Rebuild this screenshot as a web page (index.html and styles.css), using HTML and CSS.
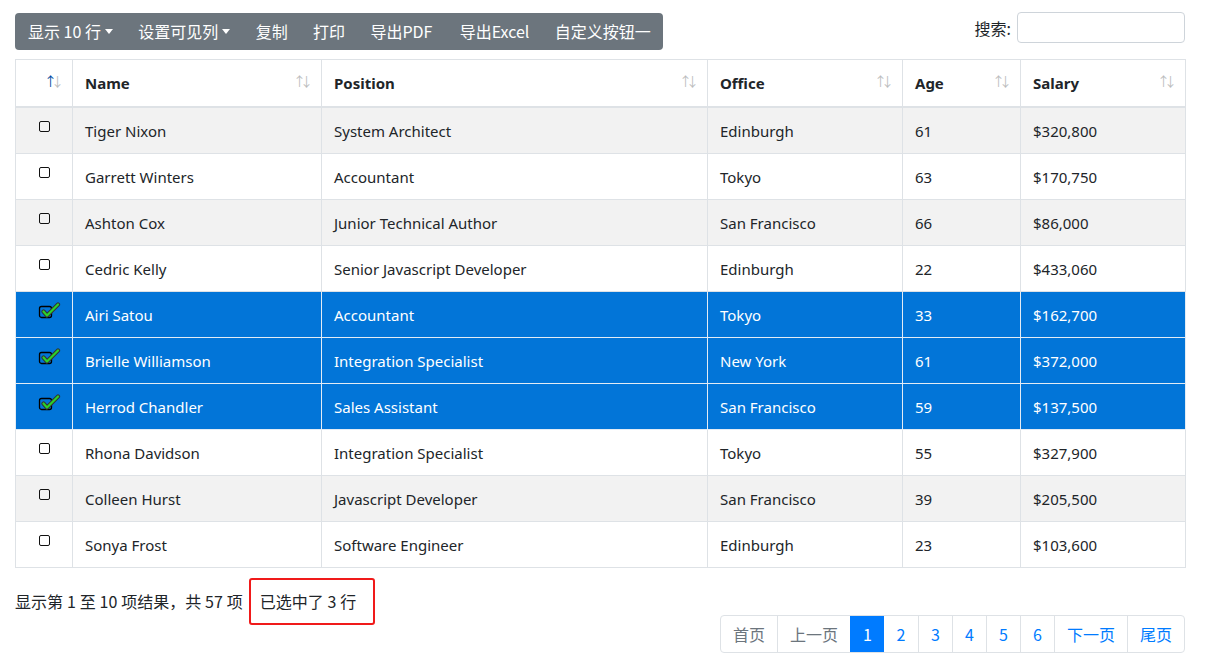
FILE: index.html
```html
<!DOCTYPE html>
<html lang="zh">
<head>
<meta charset="utf-8">
<title>DataTables</title>
<link rel="stylesheet" href="styles.css">
</head>
<body>
<div class="wrap">
  <div class="top">
    <div class="btn-group">
      <span class="btn">显示 10 行<span class="caret"></span></span>
      <span class="btn">设置可见列<span class="caret"></span></span>
      <span class="btn">复制</span>
      <span class="btn">打印</span>
      <span class="btn">导出PDF</span>
      <span class="btn">导出Excel</span>
      <span class="btn">自定义按钮一</span>
    </div>
    <label class="search">搜索:<input type="search" class="search-input"></label>
  </div>
  <table class="table">
    <colgroup>
      <col class="c0"><col class="c1"><col class="c2"><col class="c3"><col class="c4"><col class="c5">
    </colgroup>
    <thead>
      <tr>
        <th class="sort asc"></th>
        <th class="sort">Name</th>
        <th class="sort">Position</th>
        <th class="sort">Office</th>
        <th class="sort">Age</th>
        <th class="sort">Salary</th>
      </tr>
    </thead>
    <tbody>
      <tr class="odd"><td class="chk"><span class="box"></span></td><td>Tiger Nixon</td><td>System Architect</td><td>Edinburgh</td><td>61</td><td>$320,800</td></tr>
      <tr><td class="chk"><span class="box"></span></td><td>Garrett Winters</td><td>Accountant</td><td>Tokyo</td><td>63</td><td>$170,750</td></tr>
      <tr class="odd"><td class="chk"><span class="box"></span></td><td>Ashton Cox</td><td>Junior Technical Author</td><td>San Francisco</td><td>66</td><td>$86,000</td></tr>
      <tr><td class="chk"><span class="box"></span></td><td>Cedric Kelly</td><td>Senior Javascript Developer</td><td>Edinburgh</td><td>22</td><td>$433,060</td></tr>
      <tr class="sel"><td class="chk"><svg class="tick" viewBox="0 0 24 18" width="24" height="18"><rect x="1.5" y="4.5" width="12" height="11" rx="2" fill="none" stroke="#000" stroke-width="1.3"/><path d="M5.5 9.5 L9 13.5 L20 2.5" fill="none" stroke="#333" stroke-width="4.2" stroke-linecap="round" stroke-linejoin="round"/><path d="M5.5 9.5 L9 13.5 L20 2.5" fill="none" stroke="#2bd12b" stroke-width="2.2" stroke-linecap="round" stroke-linejoin="round"/></svg></td><td>Airi Satou</td><td>Accountant</td><td>Tokyo</td><td>33</td><td>$162,700</td></tr>
      <tr class="sel"><td class="chk"><svg class="tick" viewBox="0 0 24 18" width="24" height="18"><rect x="1.5" y="4.5" width="12" height="11" rx="2" fill="none" stroke="#000" stroke-width="1.3"/><path d="M5.5 9.5 L9 13.5 L20 2.5" fill="none" stroke="#333" stroke-width="4.2" stroke-linecap="round" stroke-linejoin="round"/><path d="M5.5 9.5 L9 13.5 L20 2.5" fill="none" stroke="#2bd12b" stroke-width="2.2" stroke-linecap="round" stroke-linejoin="round"/></svg></td><td>Brielle Williamson</td><td>Integration Specialist</td><td>New York</td><td>61</td><td>$372,000</td></tr>
      <tr class="sel"><td class="chk"><svg class="tick" viewBox="0 0 24 18" width="24" height="18"><rect x="1.5" y="4.5" width="12" height="11" rx="2" fill="none" stroke="#000" stroke-width="1.3"/><path d="M5.5 9.5 L9 13.5 L20 2.5" fill="none" stroke="#333" stroke-width="4.2" stroke-linecap="round" stroke-linejoin="round"/><path d="M5.5 9.5 L9 13.5 L20 2.5" fill="none" stroke="#2bd12b" stroke-width="2.2" stroke-linecap="round" stroke-linejoin="round"/></svg></td><td>Herrod Chandler</td><td>Sales Assistant</td><td>San Francisco</td><td>59</td><td>$137,500</td></tr>
      <tr><td class="chk"><span class="box"></span></td><td>Rhona Davidson</td><td>Integration Specialist</td><td>Tokyo</td><td>55</td><td>$327,900</td></tr>
      <tr class="odd"><td class="chk"><span class="box"></span></td><td>Colleen Hurst</td><td>Javascript Developer</td><td>San Francisco</td><td>39</td><td>$205,500</td></tr>
      <tr><td class="chk"><span class="box"></span></td><td>Sonya Frost</td><td>Software Engineer</td><td>Edinburgh</td><td>23</td><td>$103,600</td></tr>
    </tbody>
  </table>
  <div class="bottom">
    <div class="info">显示第 1 至 10 项结果，共 57 项<span class="selinfo">已选中了 3 行</span></div>
    <ul class="pager">
      <li class="pg dis">首页</li>
      <li class="pg dis">上一页</li>
      <li class="pg num active">1</li>
      <li class="pg num">2</li>
      <li class="pg num">3</li>
      <li class="pg num">4</li>
      <li class="pg num">5</li>
      <li class="pg num">6</li>
      <li class="pg">下一页</li>
      <li class="pg">尾页</li>
    </ul>
  </div>
</div>
</body>
</html>
```
FILE: styles.css
```css
html, body {
  margin: 0;
  padding: 0;
  background: #fff;
}
body {
  font-family: "Noto Sans", "Noto Sans CJK SC", sans-serif;
  font-size: 15px;
  color: #212529;
}
.wrap {
  padding: 13px 21px 0 15px;
}
.top {
  display: flex;
  justify-content: space-between;
  align-items: flex-start;
  height: 46px;
}
.btn-group {
  display: flex;
  background: #6c757d;
  border-radius: 4px;
  height: 37px;
  padding: 0;
}
.btn {
  color: #fff;
  font-size: 16px;
  line-height: 37px;
  padding: 0 12.7px;
  white-space: nowrap;
  font-family: "Noto Sans CJK SC", "Noto Sans", sans-serif;
}
.btn:first-child { padding-left: 13px; }
.btn:nth-child(5) { padding-right: 14.5px; }
.btn:last-child { padding-right: 12px; }
.caret {
  display: inline-block;
  margin-left: 4px;
  vertical-align: 4px;
  border-top: 5px solid #fff;
  border-left: 4px solid transparent;
  border-right: 4px solid transparent;
}
.search {
  display: flex;
  align-items: center;
  gap: 6px;
  font-family: "Noto Sans CJK SC", sans-serif;
  font-size: 16px;
  margin-top: -1px;
}
.search-input {
  width: 168px;
  box-sizing: border-box;
  height: 31px;
  border: 1px solid #ced4da;
  border-radius: 4px;
  margin: 0;
  padding: 0 8px;
}
.table {
  width: 1170px;
  border-collapse: collapse;
  table-layout: fixed;
  border: 1px solid #dee2e6;
}
.c0 { width: 57px; }
.c1 { width: 249px; }
.c2 { width: 386px; }
.c3 { width: 195px; }
.c4 { width: 118px; }
.c5 { width: 165px; }
th, td {
  border: 1px solid #dee2e6;
  padding: 13px 12px 11px;
  line-height: 21px;
  text-align: left;
  vertical-align: top;
}
th {
  font-weight: 700;
  border-bottom: 2px solid #dee2e6;
  position: relative;
  padding-top: 13px;
  padding-bottom: 12px;
}
th.sort::before,
th.sort::after {
  position: absolute;
  top: 13px;
  font-size: 13px;
  font-weight: 400;
  opacity: 0.3;
  line-height: 16px;
  color: #212529;
}
th.sort::before { content: "↑"; right: 15px; }
th.sort::after { content: "↓"; right: 8px; }
th.asc::before { opacity: 1; color: #004a9f; }
td {
  font-size: 15px;
}
tr.odd td { background: #f2f2f2; }
tr.sel td {
  background: #0275d8;
  color: #fff;
  border-color: #e3ecf5;
}
td.chk {
  text-align: center;
  padding: 0;
  position: relative;
}
.box {
  display: block;
  width: 9px;
  height: 9px;
  border: 1.3px solid #111;
  border-radius: 2px;
  margin: 13px auto 0;
}
.tick {
  display: block;
  margin: 10px 0 0 22px;
}
.bottom {
  display: flex;
  flex-direction: column;
  margin-top: 9px;
}
.info {
  display: flex;
  align-items: center;
  font-family: "Noto Sans CJK SC", sans-serif;
  font-size: 16px;
  height: 48px;
  word-spacing: 0.3px;
}
.selinfo {
  margin-left: 6px;
  border: 2px solid #f01a1a;
  border-radius: 3px;
  height: 43px;
  display: flex;
  align-items: center;
  padding: 0 17px 0 9px;
}
.pager {
  list-style: none;
  margin: -10px 0 0 auto;
  padding: 0;
  display: flex;
  border: 1px solid #dee2e6;
  border-radius: 4px;
  height: 36px;
}
.pg {
  font-family: "Noto Sans CJK SC", sans-serif;
  font-size: 16px;
  line-height: 36px;
  padding: 0 12px;
  color: #007bff;
  border-left: 1px solid #dee2e6;
}
.pg:first-child { border-left: none; }
.pg.dis { color: #6c757d; }
.pg.num { width: 34px; box-sizing: border-box; padding: 0; text-align: center; }
.pg.active { background: #007bff; color: #fff; border-left-color: #007bff; }
.pg.active + .pg { border-left: none; }
```
